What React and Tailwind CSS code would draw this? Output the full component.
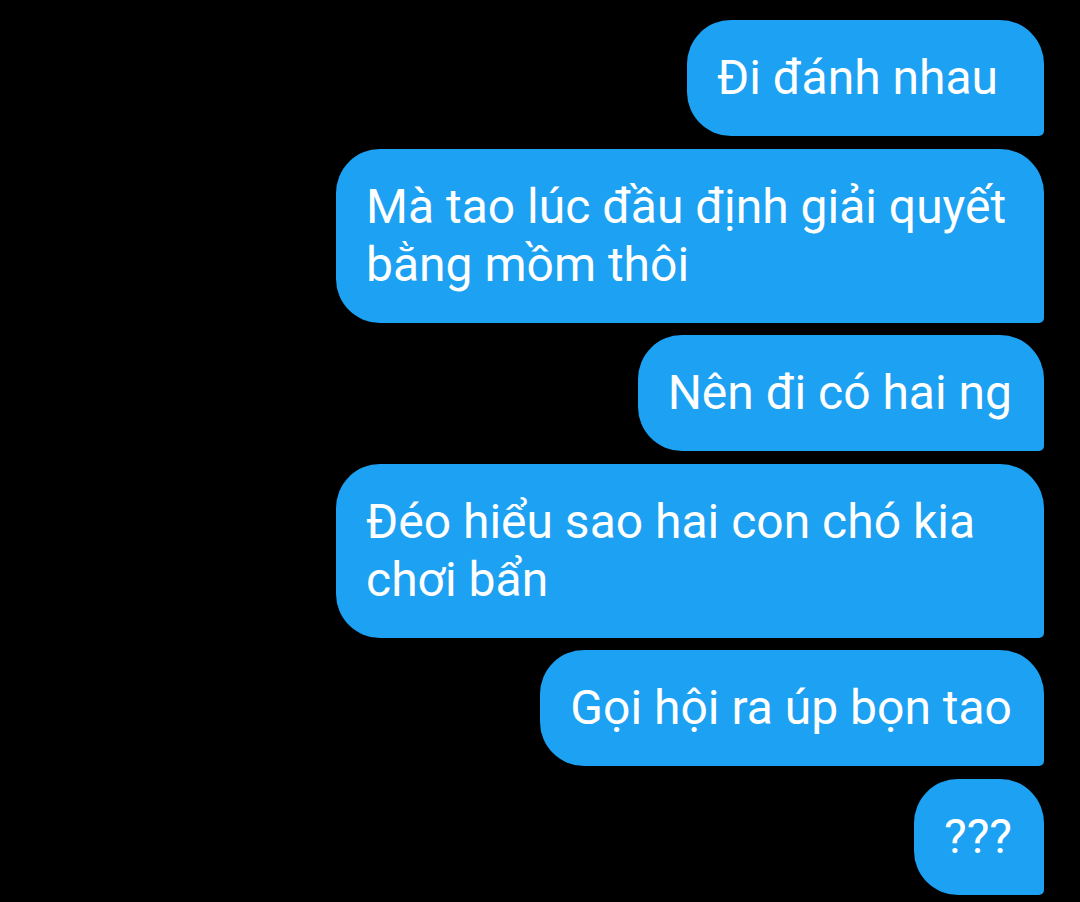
export default function App() {
  const msgs = [
    { t: "Đi đánh nhau", pr: "pr-[46px]" },
    { t: "Mà tao lúc đầu định giải quyết bằng mồm thôi", pr: "pr-[32px]" },
    { t: "Nên đi có hai ng", pr: "pr-[32px]" },
    { t: "Đéo hiểu sao hai con chó kia chơi bẩn", pr: "pr-[32px]" },
    { t: "Gọi hội ra úp bọn tao", pr: "pr-[32px]" },
    { t: "???", pr: "pr-[32px]" },
  ];
  return (
    <div className="w-[1080px] h-[902px] bg-black overflow-hidden flex flex-col items-end gap-[12.5px] pt-[20px] pr-[36px]" style={{ fontFamily: "Roboto, 'Noto Sans', sans-serif" }}>
      {msgs.map((m, i) => (
        <div
          key={i}
          className={`max-w-[708px] bg-[#1DA1F2] text-white text-[48px] leading-[58px] pl-[30px] py-[29px] rounded-tl-[44px] rounded-tr-[44px] rounded-bl-[44px] rounded-br-[5px] ${m.pr}`}
        >
          {m.t}
        </div>
      ))}
    </div>
  );
}
